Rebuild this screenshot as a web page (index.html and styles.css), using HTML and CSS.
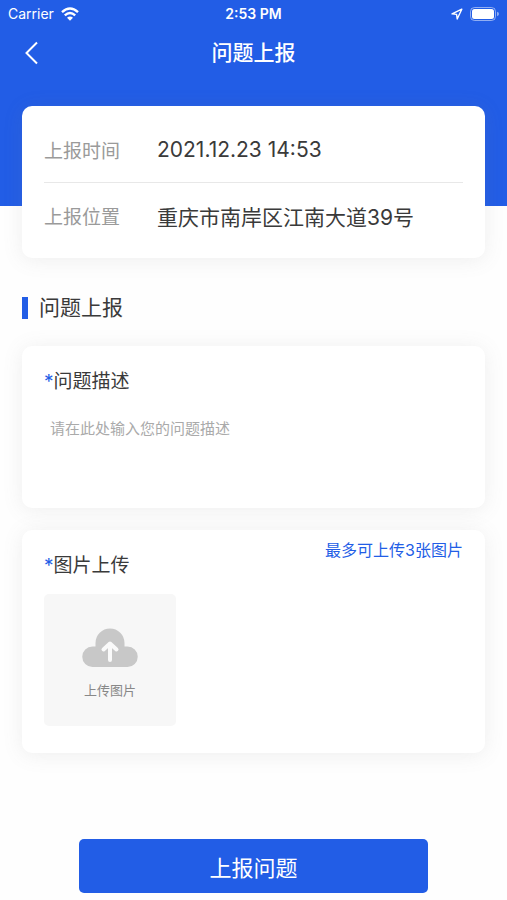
FILE: index.html
```html
<!DOCTYPE html>
<html lang="zh-CN">
    <head>
        <meta charset="UTF-8" />
        <meta name="viewport" content="width=device-width, initial-scale=1" />
        <title>问题上报</title>
        <link rel="stylesheet" href="styles.css">
    </head>
    <body>

        <header class="page-header">
            <div class="status-bar">
                <div class="status-left">
                    <span>Carrier</span>
                    <svg class="wifi-icon" width="18" height="14" viewBox="0 0 18 14" fill="none" stroke="#fff" stroke-width="2.4">
                        <path d="M1 5.2Q9-2.2 17 5.2" />
                        <path d="M3.8 8.4Q9 3.6 14.2 8.4" />
                        <path d="M9 13.8L6 10.8Q9 8 12 10.8Z" fill="#fff" stroke="none" />
                    </svg>
                </div>
                <span class="status-time">2:53 PM</span>
                <div class="status-right">
                    <svg width="12" height="12" viewBox="0 0 12 12" fill="none" stroke="#fff" stroke-width="1.4" stroke-linejoin="round">
                        <path d="M10.8 1.2L1 5.9L5.6 6.4L6.2 11Z" />
                    </svg>
                    <svg width="29" height="14" viewBox="0 0 29 14">
                        <rect x="0.5" y="0.5" width="25" height="13" rx="4" fill="none" stroke="#fff" stroke-opacity="0.5" />
                        <rect x="2" y="2" width="22" height="10" rx="2.5" fill="#fff" />
                        <path d="M27 4.8Q29 5.4 29 7T27 9.2Z" fill="#fff" fill-opacity="0.5" />
                    </svg>
                </div>
            </div>
            <nav class="nav-bar">
                <a href="#" class="back-link" aria-label="返回">
                    <svg width="14" height="24" viewBox="0 0 14 24" fill="none" stroke="#fff" stroke-width="2">
                        <path d="M13 1.5L2.5 12L13 22.5" />
                    </svg>
                </a>
                <h1 class="nav-title">问题上报</h1>
            </nav>
        </header>

        <main class="content">
            <dl class="card info-card">
                <div class="info-row">
                    <dt>上报时间</dt>
                    <dd>2021.12.23 14:53</dd>
                </div>
                <div class="info-row">
                    <dt>上报位置</dt>
                    <dd>重庆市南岸区江南大道39号</dd>
                </div>
            </dl>

            <h2 class="section-title">问题上报</h2>

            <form class="report-form">
                <div class="card describe-card">
                    <label class="field-label" for="description"><span class="required">*</span>问题描述</label>
                    <textarea id="description" placeholder="请在此处输入您的问题描述"></textarea>
                </div>

                <div class="card upload-card">
                    <div class="upload-head">
                        <span class="field-label" id="uploadLabel"><span class="required">*</span>图片上传</span>
                        <span class="upload-hint">最多可上传3张图片</span>
                    </div>
                    <button type="button" class="upload-button" aria-describedby="uploadLabel">
                        <svg width="56" height="40" viewBox="0 0 56 40">
                            <path d="M10.5 18.5H13.5V15A14.5 14.5 0 0 1 42.5 15V18.5H45.5A10.2 10.2 0 0 1 45.5 39H10.5A10.2 10.2 0 0 1 10.5 18.5Z" fill="#c8c8c8" />
                            <path d="M28 32V16M21.5 21.5L28 15.5L34.5 21.5" fill="none" stroke="#fafafa" stroke-width="4" stroke-linejoin="round" stroke-linecap="round" />
                        </svg>
                        <span>上传图片</span>
                    </button>
                </div>

                <button type="submit" class="submit-button">上报问题</button>
            </form>
        </main>

    </body>
</html>
```

FILE: styles.css
```css
* {
    box-sizing: border-box;
}

body {
    margin: 0;
    font-family: Inter, "Noto Sans CJK SC", sans-serif;
    background-color: #fefefe;
    color: #3a3a3a;
}

button,
textarea {
    font-family: inherit;
}

.page-header {
    padding-bottom: 128px;
    background-color: #225de6;
    color: #fff;
}

.status-bar {
    display: grid;
    grid-template-columns: 1fr auto 1fr;
    align-items: center;
    height: 27px;
    padding: 0 8px;
    font-size: 14px;
}

.status-left,
.status-right {
    display: flex;
    align-items: center;
    gap: 7px;
}

.status-right {
    justify-content: flex-end;
}

.status-time {
    font-weight: 600;
}

.nav-bar {
    display: grid;
    grid-template-columns: 1fr auto 1fr;
    align-items: center;
    height: 51px;
    padding: 0 24px;
}

.back-link {
    display: flex;
}

.nav-title {
    margin: 0;
    font-size: 21px;
    line-height: 30px;
    font-weight: 500;
}

.content {
    margin-top: -100px;
    padding: 0 22px;
}

.card {
    margin: 0;
    padding: 0 22px;
    background-color: #fff;
    border-radius: 10px;
    box-shadow: 0 2px 20px rgba(120, 120, 120, 0.12);
}

.info-card {
    padding-top: 10px;
    padding-bottom: 10px;
}

.info-row {
    display: flex;
    align-items: center;
    min-height: 66px;
}

.info-row + .info-row {
    border-top: 1px solid #e8e8e8;
}

.info-row dt {
    width: 113px;
    font-size: 19px;
    color: #9a9a9a;
}

.info-row dd {
    flex: 1;
    margin: 0;
    font-size: 21px;
}

.section-title {
    display: flex;
    align-items: center;
    gap: 11px;
    margin: 34px 0 22px;
    font-size: 21px;
    line-height: 32px;
    font-weight: 400;
}

.section-title::before {
    content: "";
    width: 6px;
    height: 22px;
    background-color: #225de6;
}

.describe-card {
    padding-top: 22px;
    padding-bottom: 14px;
}

.field-label {
    display: block;
    font-size: 19px;
    line-height: 28px;
}

.required {
    color: #225de6;
}

.describe-card textarea {
    display: block;
    width: 100%;
    height: 80px;
    margin-top: 18px;
    padding: 4px 6px;
    border: none;
    outline: none;
    resize: none;
    background: none;
    font-size: 15px;
    line-height: 22px;
    color: #3a3a3a;
}

.describe-card textarea::placeholder {
    color: #aaa;
}

.upload-card {
    margin-top: 22px;
    padding-top: 8px;
    padding-bottom: 27px;
}

.upload-head {
    display: flex;
    justify-content: space-between;
    align-items: flex-start;
    margin-bottom: 14px;
}

.upload-head .field-label {
    margin-top: 14px;
}

.upload-hint {
    font-size: 16px;
    line-height: 24px;
    color: #225de6;
}

.upload-button {
    display: flex;
    flex-direction: column;
    align-items: center;
    justify-content: center;
    gap: 12px;
    width: 132px;
    height: 132px;
    padding: 8px 0 0;
    border: none;
    border-radius: 5px;
    background-color: #f7f7f7;
    font-size: 13px;
    line-height: 20px;
    color: #888;
    cursor: pointer;
}

.submit-button {
    display: block;
    width: calc(100% - 114px);
    height: 54px;
    margin: 86px auto 7px;
    border: none;
    border-radius: 5px;
    background-color: #225de6;
    font-size: 22px;
    color: #fff;
    cursor: pointer;
}

.submit-button:hover {
    background-color: #1a4fcb;
}
```
